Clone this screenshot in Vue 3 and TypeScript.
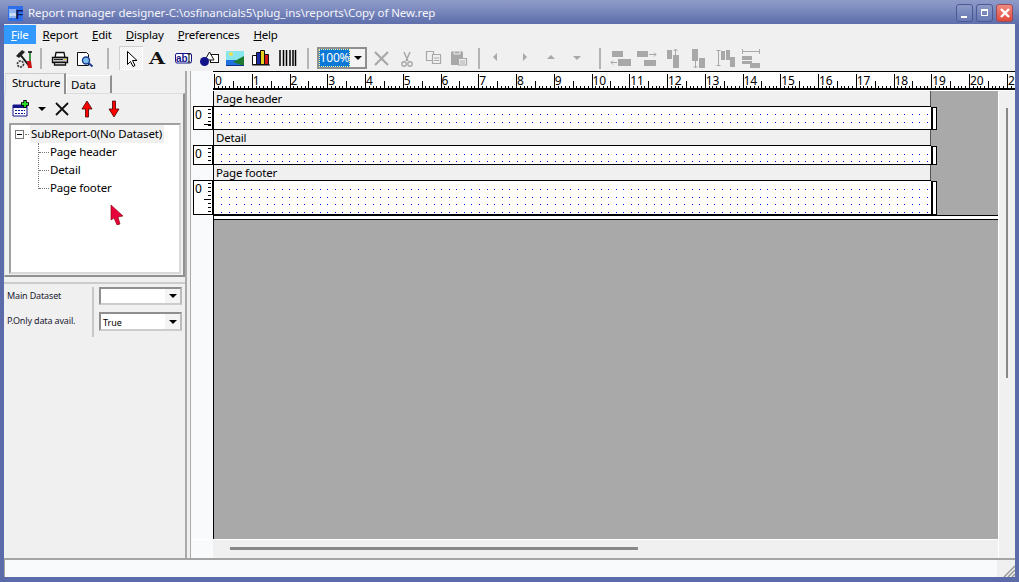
<script setup lang="ts">
const CM = 37.75
const menus = [
  { key: 'F', rest: 'ile', active: true },
  { key: 'R', rest: 'eport', active: false },
  { key: 'E', rest: 'dit', active: false },
  { key: 'D', rest: 'isplay', active: false },
  { key: 'P', rest: 'references', active: false },
  { key: 'H', rest: 'elp', active: false },
]
const cmNumbers = Array.from({ length: 21 }, (_, i) => i)
function rulerTicks(): string {
  let d = ''
  for (let i = 0; i < 212; i++) {
    const x = Math.round(1 + i * CM / 10) + 0.5
    let h = 3
    if (i % 10 === 0) h = 15
    else if (i % 5 === 0) h = 8
    d += `M${x} ${18 - h}V18`
  }
  return d
}
const ruler = rulerTicks()
function dots(rows: number[]): string {
  let d = ''
  for (const y of rows) {
    for (let i = 0; i < 94; i++) {
      d += `M${Math.round(8 + i * 7.59)} ${y}h1v1h-1z`
    }
  }
  return d
}
function boxTicks(h: number, mid: number): string {
  let d = ''
  for (let y = 3; y < h - 1; y += 4) d += `M15 ${y + 0.5}H18`
  if (mid > 0) d += `M11 ${mid + 0.5}H18`
  return d
}
const sections = [
  { name: 'Page header', h: 24, mid: 18, rows: dots([8, 16]) },
  { name: 'Detail', h: 20, mid: 0, rows: dots([9, 16]) },
  { name: 'Page footer', h: 35, mid: 19, rows: dots([9, 17, 24, 32]) },
]
</script>

<template>
  <div class="win">
    <header class="title">
      <svg class="logo" width="15" height="15" viewBox="0 0 15 15">
        <rect x="0" y="0" width="15" height="15" fill="#2d6fe8" />
        <rect x="1" y="3" width="7" height="9" fill="#8fb2f0" />
        <text x="1.500" y="10" class="logo-os">os</text>
        <text x="7.500" y="12.500" class="logo-f">F</text>
      </svg>
      <span class="title-text">Report manager designer-C:\osfinancials5\plug_ins\reports\Copy of New.rep</span>
      <div class="caps">
        <div class="cap"><span class="cap-min"></span></div>
        <div class="cap"><span class="cap-max"></span></div>
        <div class="cap close">
          <svg width="12" height="12" viewBox="0 0 12 12"><path d="M2 2l8 8M10 2l-8 8" stroke="#fff" stroke-width="2.4" /></svg>
        </div>
      </div>
    </header>

    <div class="inner">
      <nav class="menu">
        <div v-for="m in menus" :key="m.key" class="menu-item" :class="{ active: m.active }"><u>{{ m.key }}</u>{{ m.rest }}</div>
      </nav>

      <div class="toolbar">
        <svg class="ic wizard" viewBox="0 0 24 24">
          <path d="M7 7l11 14" stroke="#111" stroke-width="2" />
          <path d="M4 10l6-6 3 2-6 6z" fill="#222" />
          <circle cx="8.500" cy="18" r="3" fill="none" stroke="#444" stroke-width="1.800" stroke-dasharray="2 1" />
          <path d="M15 15h4l1 7h-4z" fill="#c81414" />
          <path d="M18 6v9" stroke="#1e7a1e" stroke-width="1.600" />
          <path d="M16 6h4" stroke="#111" stroke-width="1.600" />
        </svg>
        <span class="sep s1"></span>
        <svg class="ic print" viewBox="0 0 24 24">
          <path d="M8 6.500h8l1 5H7z" fill="#fff" stroke="#111" stroke-width="1.300" />
          <path d="M4.500 11.500h15v5h-15z" fill="#c8c8c8" stroke="#111" stroke-width="1.300" />
          <path d="M6.500 16.500h11v2.500h-11z" fill="#fff" stroke="#111" stroke-width="1.300" />
          <path d="M6 13.500h9" stroke="#222" />
          <path d="M16 13.500h2" stroke="#e8c820" />
        </svg>
        <svg class="ic preview" viewBox="0 0 24 24">
          <path d="M4.500 6.500h9l2 2v11h-11z" fill="#fff" stroke="#111" />
          <circle cx="13" cy="14.500" r="3.500" fill="#7fc0ee" stroke="#1c3e90" stroke-width="1.400" />
          <path d="M15.500 17l4 3.500" stroke="#1c3e90" stroke-width="2" />
        </svg>
        <span class="sep s2"></span>
        <div class="group g-tools">
          <div class="tool-on">
            <svg width="24" height="24" viewBox="0 0 24 24"><path d="M8.500 5.500v13l3-3 2.500 5 2-1-2.500-5h4.500z" fill="#fff" stroke="#000" /></svg>
          </div>
          <svg class="ic" viewBox="0 0 24 24"><text x="4" y="17.500" class="glyph-a" textLength="16" lengthAdjust="spacingAndGlyphs">A</text></svg>
          <svg class="ic" viewBox="0 0 24 24">
            <rect x="4.500" y="7.500" width="16" height="9.500" rx="1.500" fill="#fff" stroke="#14148a" />
            <text x="5" y="15.500" class="abl">ab</text>
            <path d="M18 8v8M16.500 8h3M16.500 16h3" stroke="#111" fill="none" />
          </svg>
          <svg class="ic" viewBox="0 0 24 24">
            <rect x="13.500" y="8.500" width="8" height="8" fill="#fff" stroke="#111" />
            <path d="M12.500 6l4.500 8H8z" fill="#fff" stroke="#111" />
            <circle cx="7.500" cy="15.500" r="4.500" fill="#14148a" />
          </svg>
          <svg class="ic" viewBox="0 0 24 24">
            <rect x="3" y="5" width="18" height="9" fill="#8ae6ee" />
            <circle cx="8" cy="8" r="2" fill="#f0e050" />
            <path d="M3 14h18v6H3z" fill="#2070e0" />
            <path d="M21 10L10 16l11 4z" fill="#1e7a30" />
            <path d="M3 19.500h18" stroke="#10308a" />
          </svg>
          <svg class="ic" viewBox="0 0 24 24">
            <path d="M3.500 9.500h4v9h-4z" fill="#fff" stroke="#111" />
            <path d="M7.500 6.500h4v12h-4z" fill="#1c2aa8" stroke="#111" />
            <path d="M11.500 4.500h4v14h-4z" fill="#e8d020" stroke="#111" />
            <path d="M15.500 8.500h4v10h-4z" fill="#d01818" stroke="#111" />
            <path d="M3 19h18" stroke="#111" />
          </svg>
          <svg class="ic" viewBox="0 0 24 24">
            <path d="M5 4v16M8.500 4v16M11.500 4v16M15 4v16M18 4v16M20.500 4v16" stroke="#000" stroke-width="1.500" />
          </svg>
        </div>
        <span class="sep s3"></span>
        <div class="zoom-box">
          <span class="zoom-val">100%</span>
          <span class="combo-btn"><i class="tri"></i></span>
        </div>
        <div class="group g-edit">
          <svg class="ic" viewBox="0 0 24 24"><path d="M6 6l13 13M19 6L6 19" stroke="#a8a8a8" stroke-width="2.200" /></svg>
          <svg class="ic" viewBox="0 0 24 24">
            <path d="M9 6l4 9M15 6l-4 9" stroke="#a8a8a8" stroke-width="1.500" />
            <circle cx="9" cy="18" r="2.200" fill="none" stroke="#a8a8a8" stroke-width="1.400" />
            <circle cx="15" cy="18" r="2.200" fill="none" stroke="#a8a8a8" stroke-width="1.400" />
          </svg>
          <svg class="ic" viewBox="0 0 24 24">
            <path d="M5.500 5.500h7v9h-7z" fill="#f0f0f0" stroke="#a8a8a8" stroke-width="1.200" />
            <path d="M11.500 8.500h8v9h-8z" fill="#f0f0f0" stroke="#a8a8a8" stroke-width="1.200" />
            <path d="M13 12h5M13 14.500h5" stroke="#a8a8a8" />
          </svg>
          <svg class="ic" viewBox="0 0 24 24">
            <path d="M4 7a2 2 0 0 1 2-2h8a2 2 0 0 1 2 2v12H4z" fill="#a8a8a8" />
            <path d="M7 5h6v3H7z" fill="#a8a8a8" stroke="#f0f0f0" />
            <path d="M11.500 12.500h8v6.500h-8z" fill="#f0f0f0" stroke="#a8a8a8" stroke-width="1.200" />
            <path d="M13 15h5M13 17h5" stroke="#a8a8a8" />
          </svg>
        </div>
        <span class="sep s4"></span>
        <div class="group g-move">
          <svg class="ic" viewBox="0 0 24 24"><path d="M10 7v8l-4-4z" fill="#a8a8a8" /></svg>
          <svg class="ic" viewBox="0 0 24 24"><path d="M10 7v8l4-4z" fill="#a8a8a8" /></svg>
          <svg class="ic" viewBox="0 0 24 24"><path d="M8 13h8l-4-4z" fill="#a8a8a8" /></svg>
          <svg class="ic" viewBox="0 0 24 24"><path d="M8 10h8l-4 4z" fill="#a8a8a8" /></svg>
        </div>
        <span class="sep s5"></span>
        <div class="group g-align">
          <svg class="ic" viewBox="0 0 24 24"><path d="M3 5h11v6H3zM9 13h13v7H9z" fill="#a8a8a8" /><path d="M2 16.500h6M2 16.500l2-2M2 16.500l2 2" stroke="#a8a8a8" fill="none" /></svg>
          <svg class="ic" viewBox="0 0 24 24"><path d="M2 5h11v6H2zM9 14h12v6H9z" fill="#a8a8a8" /><path d="M14 8.500h7M21 8.500l-2-2M21 8.500l-2 2" stroke="#a8a8a8" fill="none" /></svg>
          <svg class="ic" viewBox="0 0 24 24"><path d="M6 4h5v9H6zM12 9h6v13h-6z" fill="#a8a8a8" /><path d="M14.500 3v6M14.500 3l-2 2M14.500 3l2 2" stroke="#a8a8a8" fill="none" /></svg>
          <svg class="ic" viewBox="0 0 24 24"><path d="M5 3h6v12H5zM12 12h6v10h-6z" fill="#a8a8a8" /><path d="M8.500 15v7M8.500 22l-2-2M8.500 22l2-2" stroke="#a8a8a8" fill="none" /></svg>
          <svg class="ic" viewBox="0 0 24 24"><path d="M8 5h4v9H8zM13 4h4v10h-4zM17 11h5v10h-5z" fill="#a8a8a8" /><path d="M5.500 4v16M3.500 4.500h4M3.500 19.500h4" stroke="#a8a8a8" fill="none" /></svg>
          <svg class="ic" viewBox="0 0 24 24"><path d="M3 10h10v4H3zM3 15h10v3H3zM11 17h10v5H11z" fill="#a8a8a8" /><path d="M3 5.500h18M3.500 3v5M20.500 3v5" stroke="#a8a8a8" fill="none" /></svg>
        </div>
      </div>

      <div class="main">
        <aside class="left">
          <div class="tabs">
            <div class="tab on">Structure</div>
            <div class="tab">Data</div>
          </div>
          <div class="struct">
            <div class="struct-tools">
              <svg class="st add" viewBox="0 0 18 18">
                <path d="M1 5h14v11H1z" fill="#fff" stroke="#14148a" />
                <path d="M1 5h14v3H1z" fill="#14148a" />
                <path d="M3 10.500h10M3 13.500h10" stroke="#14148a" stroke-dasharray="2 1" />
                <path d="M13 0v8M9 4h8" stroke="#000" stroke-width="3.400" />
                <path d="M13 1v6M10 4h6" stroke="#26e026" stroke-width="1.800" />
              </svg>
              <i class="tri drop"></i>
              <svg class="st del" viewBox="0 0 18 18"><path d="M3 3l12 12M15 3L3 15" stroke="#111" stroke-width="1.800" /></svg>
              <svg class="st up" viewBox="0 0 18 18"><path d="M9 1l5 8h-3.500v8h-3V9H4z" fill="#f00" stroke="#400" stroke-width=".8" /></svg>
              <svg class="st down" viewBox="0 0 18 18"><path d="M9 17l5-8h-3.500V1h-3v8H4z" fill="#f00" stroke="#400" stroke-width=".8" /></svg>
            </div>
            <div class="tree">
              <div class="tree-root">
                <span class="expander"></span>
                <span class="dot-h short"></span>
                <span class="tree-sel">SubReport-0(No Dataset)</span>
              </div>
              <div class="tree-kids">
                <div class="tree-node"><span class="dot-h"></span>Page header</div>
                <div class="tree-node"><span class="dot-h"></span>Detail</div>
                <div class="tree-node"><span class="dot-h"></span>Page footer</div>
              </div>
            </div>
          </div>
          <div class="props">
            <div class="prop-labels">
              <div>Main Dataset</div>
              <div class="tight">P.Only data avail.</div>
            </div>
            <div class="prop-vals">
              <div class="combo"><span class="combo-txt"></span><span class="combo-btn"><i class="tri"></i></span></div>
              <div class="combo c2"><span class="combo-txt">True</span><span class="combo-btn"><i class="tri"></i></span></div>
            </div>
          </div>
          <svg class="cursor" width="14" height="20" viewBox="0 0 14 20">
            <path d="M1 0l12 11-5 1 2 7-3 1-3-7-3 2z" fill="#e8003c" stroke="#700" stroke-width=".6" />
          </svg>
        </aside>

        <section class="right">
          <svg class="ruler" width="802" height="20" viewBox="0 0 802 20">
            <rect x="0" y="0" width="802" height="20" fill="#fff" />
            <path d="M0 .5H802" stroke="#000" />
            <path d="M0 18H802" stroke="#000" stroke-width="2" />
            <path :d="ruler" stroke="#000" fill="none" />
            <text v-for="n in cmNumbers" :key="n" class="rtxt" :x="2 + n * CM" y="14">{{ n }}</text>
            <text class="rtxt" x="795" y="14">2</text>
          </svg>
          <div class="work">
            <div class="view">
              <template v-for="s in sections" :key="s.name">
                <div class="row">
                  <div class="rail"></div>
                  <div class="gray"><div class="label">{{ s.name }}</div></div>
                </div>
                <div class="row">
                  <div class="rail">
                    <svg class="vbox" width="20" :height="s.h" :viewBox="`0 0 20 ${s.h}`">
                      <rect x=".5" y=".5" width="19" :height="s.h - 1" fill="#fff" stroke="#000" />
                      <path :d="boxTicks(s.h, s.mid)" stroke="#000" />
                      <text x="2" y="13" class="btxt">0</text>
                    </svg>
                  </div>
                  <div class="gray band-wrap">
                    <svg class="band" :height="s.h" width="718" :viewBox="`0 0 718 ${s.h}`">
                      <rect x="0" y="0" width="718" :height="s.h" fill="#fff" />
                      <path d="M0 .5H718" stroke="#000" />
                      <path :d="`M0 ${s.h - .5}H718`" stroke="#000" />
                      <path d="M.5 0V99" stroke="#000" />
                      <path :d="s.rows" fill="#00f" />
                    </svg>
                    <div class="handle"></div>
                  </div>
                </div>
              </template>
              <div class="row end">
                <div class="rail"></div>
                <div class="rest"></div>
              </div>
              <div class="hbar-row">
                <div class="hbar"></div>
              </div>
            </div>
            <div class="vbar-col"><div class="vbar"></div></div>
          </div>
        </section>
      </div>

      <footer class="status">
        <div class="grip">
          <svg width="12" height="12" viewBox="0 0 12 12">
            <path d="M12 1L1 12M12 5L5 12M12 9L9 12" stroke="#999" stroke-width="1.500" />
          </svg>
        </div>
      </footer>
    </div>
  </div>
</template>

<style>
html, body { margin: 0; background: #5f70ad; }
</style>

<style scoped>
.win {
  width: 1019px;
  height: 582px;
  display: flex;
  flex-direction: column;
  overflow: hidden;
  background: #5b6ba9;
  font-family: "Noto Sans", "DejaVu Sans", sans-serif;
  font-size: 11.5px;
  letter-spacing: -0.2px;
  color: #000;
  position: relative;
}
.title {
  height: 24px;
  flex: none;
  display: flex;
  align-items: center;
  padding: 0 6px 0 8px;
  background: linear-gradient(#8e9bc9 0, #7f8dc0 35%, #6676b1 80%, #5f6fac 100%);
  box-sizing: border-box;
}
.logo { flex: none; margin-top: 2px; }
.logo-os { font-family: "Liberation Sans", sans-serif; font-size: 5.500px; font-weight: 700; fill: #fff; letter-spacing: 0; }
.logo-f { font-family: "Liberation Sans", sans-serif; font-size: 13px; font-weight: 700; fill: #101a5a; letter-spacing: 0; }
.title-text {
  margin-left: 5px;
  color: #f4f4fa;
  font-size: 11.5px;
  letter-spacing: -0.08px;
  flex: 1;
  white-space: nowrap;
}
.caps { display: flex; gap: 3px; margin-top: 1px; }
.cap {
  width: 15px;
  height: 16px;
  border: 1px solid #4c5a94;
  border-radius: 3px;
  background: linear-gradient(#8d9ac8, #6677b2);
  position: relative;
  display: flex;
  align-items: center;
  justify-content: center;
}
.cap.close {
  background: linear-gradient(#f08a80, #e04a3c);
  border-color: #9b4a58;
}
.cap-min {
  width: 6px;
  height: 2px;
  background: #fff;
  position: absolute;
  left: 4px;
  bottom: 3px;
}
.cap-max {
  width: 5px;
  height: 4px;
  border: 1px solid #fff;
  border-top-width: 2px;
}
.inner {
  flex: 1;
  margin: 0 4px 5px;
  background: #f0f0f0;
  display: flex;
  flex-direction: column;
  min-height: 0;
}
.menu {
  height: 20px;
  flex: none;
  display: flex;
  align-items: center;
}
.menu-item {
  padding: 0 7px;
  height: 19px;
  line-height: 20px;
}
.menu-item.active { background: #3399ff; color: #fff; }
.toolbar {
  height: 27px;
  flex: none;
  display: flex;
  align-items: center;
  padding: 1px 0 0 8px;
  box-sizing: border-box;
}
.ic { width: 24px; height: 24px; flex: none; display: block; }
.sep { width: 2px; height: 21px; background: #b4b4b4; flex: none; }
.s1 { margin-left: 4px; margin-right: 6px; }
.preview { margin-left: 1px; }
.s2 { margin-left: 10px; margin-right: 10px; }
.group { display: flex; gap: 2px; align-items: center; flex: none; }
.tool-on {
  width: 24px;
  height: 24px;
  background: repeating-conic-gradient(#fff 0 25%, #ececec 0 50%) 0 0 / 2px 2px;
  box-shadow: inset 1px 1px 0 #cfcfcf, inset -1px -1px 0 #fff;
}
.s3 { margin-left: 8px; margin-right: 8px; }
.zoom-box {
  width: 50px;
  height: 22px;
  box-sizing: border-box;
  border: 2px solid #8f8f8f;
  background: #fff;
  display: flex;
  align-items: stretch;
  flex: none;
}
.zoom-val {
  flex: 1;
  min-width: 0;
  background: #0a78d7;
  color: #fff;
  outline: 1px dotted #ff9;
  outline-offset: -1px;
  font-size: 12px;
  letter-spacing: -0.2px;
  line-height: 18px;
  text-align: center;
  white-space: nowrap;
}
.combo-btn {
  width: 15px;
  background: #f4f4f4;
  display: flex;
  align-items: center;
  justify-content: center;
  flex: none;
}
.tri {
  display: block;
  width: 0;
  height: 0;
  border-left: 4px solid transparent;
  border-right: 4px solid transparent;
  border-top: 4px solid #000;
}
.g-edit { margin-left: 2px; }
.s4 { margin-left: 7px; margin-right: 7px; }
.s5 { margin-left: 10px; margin-right: 8px; }
.main { flex: 1; display: flex; min-height: 0; }
.left {
  width: 183px;
  flex: none;
  box-sizing: border-box;
  border-right: 2px solid #aaa;
  position: relative;
  display: flex;
  flex-direction: column;
}
.tabs {
  height: 22px;
  display: flex;
  align-items: flex-end;
  padding-left: 1px;
  flex: none;
}
.tab {
  height: 18px;
  width: 46px;
  box-sizing: border-box;
  border-top: 1px solid #fff;
  border-right: 2px solid #909090;
  border-left: 1px solid #fff;
  padding-left: 4px;
  line-height: 18px;
}
.tab.on {
  height: 21px;
  width: 61px;
  padding-left: 6px;
  line-height: 18px;
  background: #f0f0f0;
  border-top: 1px solid #ccc;
  border-left: 1px solid #ddd;
  border-right: 2px solid #909090;
  position: relative;
  z-index: 1;
  margin-bottom: -1px;
}
.struct {
  height: 184px;
  width: 181px;
  box-sizing: border-box;
  border: 1px solid #ddd;
  border-right: 2px solid #909090;
  border-bottom: 2px solid #909090;
  display: flex;
  flex-direction: column;
  flex: none;
}
.struct-tools {
  height: 29px;
  flex: none;
  display: flex;
  align-items: center;
}
.st { width: 18px; height: 18px; flex: none; }
.add { margin-left: 7px; }
.drop { margin-left: 8px; margin-right: 8px; }
.del { margin-left: -1px; }
.up { margin-left: 7px; }
.down { margin-left: 9px; }
.tree {
  margin: 0 2px 1px 4px;
  flex: 1;
  box-sizing: border-box;
  border: 2px solid #a0a0a0;
  border-right-color: #d8d8d8;
  border-bottom-color: #d8d8d8;
  background: #fff;
  min-height: 0;
  letter-spacing: -0.15px;
}
.tree-root { height: 18px; display: flex; align-items: center; padding-left: 4px; }
.expander {
  width: 7px;
  height: 7px;
  border: 1px solid #777;
  flex: none;
  background: linear-gradient(#000, #000) center / 5px 1px no-repeat;
}
.dot-h { display: inline-block; width: 10px; border-top: 1px dotted #777; margin-right: 1px; vertical-align: middle; }
.dot-h.short { width: 4px; margin: 0 1px; flex: none; }
.tree-sel { background: #f0f0f0; padding: 0 2px 0 1px; line-height: 18px; white-space: nowrap; }
.tree-kids {
  margin-left: 27px;
  border-left: 1px dotted #777;
  height: 46px;
}
.tree-node { height: 18px; line-height: 18px; white-space: nowrap; }
.props {
  margin-top: 5px;
  padding-top: 3px;
  border-top: 2px solid #ccc;
  display: flex;
  width: 181px;
  height: 54px;
  flex: none;
}
.prop-labels {
  width: 90px;
  box-sizing: border-box;
  padding: 2px 0 0 3px;
  border-right: 2px solid #c8c8c8;
  font-size: 9px;
  letter-spacing: -0.15px;
  color: #223;
  flex: none;
  height: 50px;
}
.prop-labels div { height: 25px; line-height: 13px; white-space: nowrap; }
.prop-vals { padding-left: 5px; }
.combo {
  width: 83px;
  height: 18px;
  box-sizing: border-box;
  border: 2px solid #8f8f8f;
  border-right-color: #bbb;
  border-bottom-color: #ccc;
  background: #fff;
  display: flex;
}
.combo.c2 { height: 19px; margin-top: 7px; }
.combo-txt { flex: 1; font-size: 9px; letter-spacing: 0; padding-left: 2px; line-height: 17px; }
.cursor { position: absolute; left: 106px; top: 134px; }
.right {
  flex: 1;
  min-width: 0;
  margin-left: 3px;
  border-left: 1px solid #aaa;
  background: #f9fafc;
  display: flex;
  flex-direction: column;
  overflow: hidden;
}
.ruler { display: block; flex: none; margin-left: 22px; }
.rtxt { font-family: "Noto Sans", sans-serif; font-size: 12px; letter-spacing: -0.2px; fill: #000; }
.work { flex: 1; display: flex; min-height: 0; }
.view { width: 807px; flex: none; display: flex; flex-direction: column; }
.row { display: flex; flex: none; }
.rail { width: 22px; flex: none; padding-left: 2px; box-sizing: border-box; background: #f9fafc; }
.vbox { display: block; }
.gray { flex: 1; background: #a9a9a9; min-width: 0; display: flex; }
.label {
  width: 718px;
  height: 15px;
  box-sizing: border-box;
  background: #f0f0f0;
  border-left: 1px solid #000;
  border-right: 1px solid #555;
  padding-left: 2px;
  line-height: 16px;
  white-space: nowrap;
}
.band { display: block; flex: none; }
.band-wrap { align-items: flex-start; }
.handle {
  width: 6px;
  margin-top: 1px;
  align-self: stretch;
  box-sizing: border-box;
  border: 1px solid #000;
  border-left-width: 2px;
  background: #fff;
}
.end { flex: 1; min-height: 0; }
.rest {
  flex: 1;
  background: #a9a9a9;
  box-shadow: inset 1px 0 0 #000;
  border-top: 1px solid #000;
}
.rest::before {
  content: "";
  display: block;
  height: 3px;
  background: #fff;
  border-bottom: 1px solid #000;
  margin-left: 1px;
}
.hbar-row {
  height: 19px;
  flex: none;
  background: linear-gradient(to right, #f9fafc 22px, #f0f0f0 22px);
  padding-top: 7px;
  box-sizing: border-box;
  border-top: 1px solid #fff;
}
.hbar { width: 408px; height: 3px; margin-left: 39px; background: #888; }
.vbar-col { flex: 1; background: #f0f0f0; padding-top: 17px; box-sizing: border-box; border-left: 1px solid #fff; }
.vbar { width: 2px; height: 270px; margin-left: 7px; background: #888; }
.status {
  height: 19px;
  flex: none;
  box-sizing: border-box;
  border-top: 2px solid #a4a4a4;
  border-left: 1px solid #a4a4a4;
  background: #f9fafc;
  display: flex;
  justify-content: flex-end;
}
.grip { width: 18px; background: #f0f0f0; display: flex; align-items: flex-end; justify-content: flex-end; }
.abl { font-family: "Liberation Sans", sans-serif; font-weight: 700; font-size: 10px; letter-spacing: 0; fill: #14148a; }
.glyph-a { font-family: "DejaVu Serif", serif; font-weight: 700; font-size: 16px; letter-spacing: 0; fill: #111; }
.btxt { font-family: "Noto Sans", sans-serif; font-size: 12px; letter-spacing: 0; fill: #000; }
</style>
